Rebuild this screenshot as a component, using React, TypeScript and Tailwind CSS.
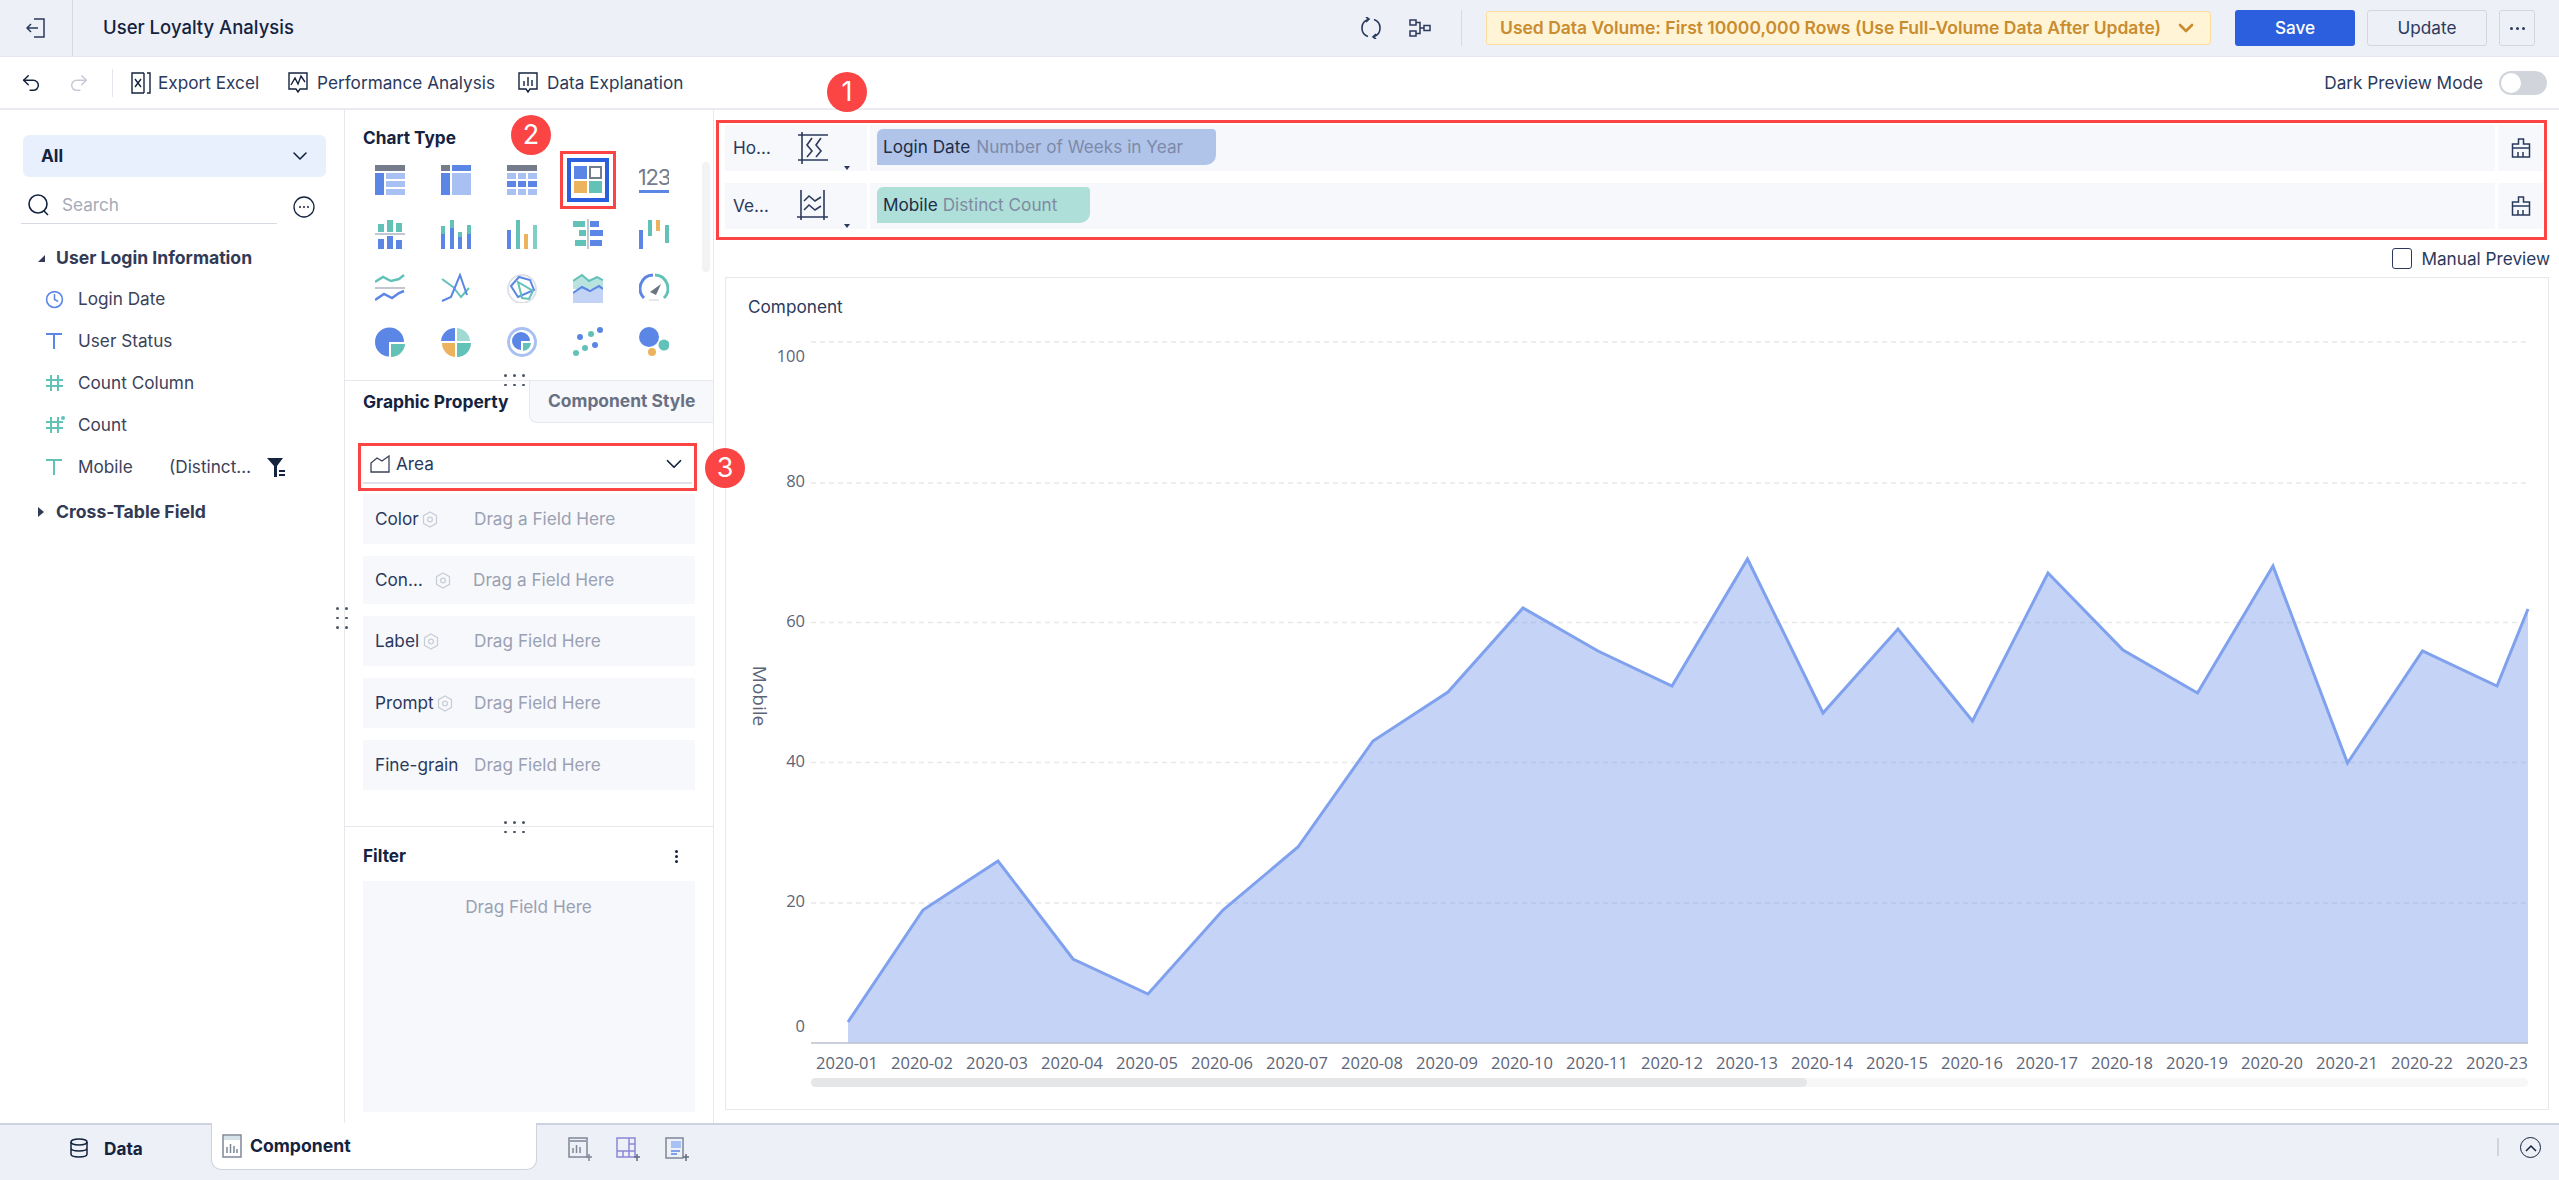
import { ChevronDown, Clock, Undo2, Redo2 } from 'lucide-react';

const B = '#5b86e5';
const T = '#62c2b8';
const O = '#ecb35e';
const L = '#a9c0f2';
const G = '#757c8c';

// chart type thumbnails, all drawn on a 30x30 box
const chartIcons = [
  <>
    <rect x="0" y="0" width="30" height="6" fill={G} />
    <rect x="0" y="8" width="9" height="22" fill={B} />
    <rect x="11" y="8" width="19" height="6" fill={L} />
    <rect x="11" y="16" width="19" height="6" fill={L} />
    <rect x="11" y="24" width="19" height="6" fill={L} />
  </>,
  <>
    <rect x="0" y="0" width="9" height="6" fill={G} />
    <rect x="11" y="0" width="19" height="6" fill={B} />
    <rect x="0" y="8" width="9" height="22" fill={B} />
    <rect x="11" y="8" width="19" height="22" fill={L} />
  </>,
  <>
    <rect x="0" y="0" width="30" height="6" fill={G} />
    <rect x="0" y="8" width="9" height="6" fill={L} />
    <rect x="11" y="8" width="8" height="6" fill={L} />
    <rect x="21" y="8" width="9" height="6" fill={L} />
    <rect x="0" y="16" width="9" height="6" fill={B} />
    <rect x="11" y="16" width="8" height="6" fill={B} />
    <rect x="21" y="16" width="9" height="6" fill={B} />
    <rect x="0" y="24" width="9" height="6" fill={L} />
    <rect x="11" y="24" width="8" height="6" fill={L} />
    <rect x="21" y="24" width="9" height="6" fill={L} />
  </>,
  <>
    <rect x="1" y="1" width="13" height="13" fill={B} />
    <rect x="17" y="2" width="11" height="11" fill="none" stroke={G} strokeWidth="2" />
    <rect x="1" y="16" width="13" height="12" fill={O} />
    <rect x="16" y="16" width="13" height="12" fill={T} />
  </>,
  <>
    <text x="15" y="20" textAnchor="middle" fontSize="22" letterSpacing="-1.2" fill={G} fontFamily="Inter, sans-serif">123</text>
    <rect x="0" y="25" width="30" height="3" fill={B} />
  </>,
  <>
    <rect x="3" y="5" width="6" height="8" fill={T} />
    <rect x="12" y="1" width="6" height="12" fill={T} />
    <rect x="21" y="4" width="6" height="9" fill={T} />
    <rect x="0" y="14" width="30" height="2" fill="#c3c7d1" />
    <rect x="3" y="20" width="6" height="10" fill={B} />
    <rect x="12" y="17" width="6" height="13" fill={B} />
    <rect x="21" y="21" width="6" height="9" fill={B} />
  </>,
  <>
    <rect x="0" y="7" width="4" height="8" fill={T} />
    <rect x="0" y="15" width="4" height="15" fill={B} />
    <rect x="9" y="1" width="4" height="8" fill={T} />
    <rect x="9" y="9" width="4" height="21" fill={B} />
    <rect x="17" y="13" width="4" height="5" fill={T} />
    <rect x="17" y="18" width="4" height="12" fill={B} />
    <rect x="26" y="6" width="4" height="9" fill={T} />
    <rect x="26" y="15" width="4" height="15" fill={B} />
  </>,
  <>
    <rect x="0" y="11" width="4" height="19" fill={B} />
    <rect x="9" y="1" width="4" height="29" fill={T} />
    <rect x="17" y="15" width="4" height="15" fill={O} />
    <rect x="26" y="6" width="4" height="24" fill={T} opacity="0.8" />
  </>,
  <>
    <rect x="0" y="2" width="12" height="6" fill={T} />
    <rect x="17" y="2" width="9" height="6" fill={B} />
    <rect x="6" y="11" width="7" height="6" fill={T} />
    <rect x="17" y="11" width="13" height="6" fill={B} />
    <rect x="2" y="21" width="11" height="6" fill={T} />
    <rect x="17" y="21" width="12" height="6" fill={B} />
    <rect x="14" y="0" width="2" height="30" fill="#c3c7d1" />
  </>,
  <>
    <rect x="0" y="11" width="4" height="19" fill={B} />
    <rect x="9" y="1" width="4" height="16" fill={T} />
    <rect x="17" y="1" width="4" height="11" fill={O} />
    <rect x="26" y="6" width="4" height="18" fill={T} />
  </>,
  <>
    <path d="M0 9 L8 4 L16 8 L24 6 L29 2" fill="none" stroke={T} strokeWidth="2.5" />
    <rect x="0" y="14" width="30" height="2" fill="#c3c7d1" />
    <path d="M0 27 L9 21 L17 25 L24 20 L29 18" fill="none" stroke={B} strokeWidth="2.5" />
  </>,
  <>
    <path d="M1 6 L12 14 L20 24 L28 15" fill="none" stroke={T} strokeWidth="2" />
    <path d="M1 28 L10 24 L19 2 L26 22" fill="none" stroke={B} strokeWidth="2" />
  </>,
  <>
    <circle cx="15" cy="16" r="14" fill="none" stroke="#dfe1e8" strokeWidth="2" />
    <path d="M4 13 L12 4 L23 7 L27 17 L11 24 Z" fill="none" stroke={B} strokeWidth="2" />
    <path d="M11 9 L26 18 L22 26 L15 25 Z" fill="none" stroke={T} strokeWidth="2" />
  </>,
  <>
    <path d="M0 8 L9 2 L16 8 L24 4 L30 7 L30 16 L0 16 Z" fill={T} opacity="0.45" />
    <path d="M0 8 L9 2 L16 8 L24 4 L30 7" fill="none" stroke={T} strokeWidth="2" />
    <path d="M0 20 L9 14 L17 18 L26 13 L30 16 L30 30 L0 30 Z" fill={L} opacity="0.7" />
    <path d="M0 20 L9 14 L17 18 L26 13 L30 16" fill="none" stroke={B} strokeWidth="2" />
  </>,
  <>
    <path d="M5 25 A13.5 13.5 0 0 1 14 2" fill="none" stroke={B} strokeWidth="3" />
    <path d="M16 2 A13.5 13.5 0 0 1 25 25" fill="none" stroke={T} strokeWidth="3" />
    <path d="M11 19 L22 11 L17 22 Z" fill="#6b7280" />
    <rect x="10" y="26" width="10" height="2" fill="#e5e7eb" />
  </>,
  <>
    <path d="M14 15 H29 A14.5 14.5 0 1 0 14 29.5 Z" fill={B} />
    <path d="M16 17 H30 A14 14 0 0 1 16 30 Z" fill={T} />
  </>,
  <>
    <path d="M14 1 L14 14 L0 14 A14 14 0 0 1 14 1 Z" fill={B} />
    <path d="M16 1 A14 14 0 0 1 29 14 L16 14 Z" fill={T} opacity="0.6" />
    <path d="M14 16 L14 30 A14 14 0 0 1 1 16 Z" fill={O} />
    <path d="M16 16 L30 16 A14 14 0 0 1 16 30 Z" fill={T} />
  </>,
  <>
    <circle cx="15" cy="15" r="13.5" fill="none" stroke={L} strokeWidth="3" />
    <path d="M14 14 H23 A9 9 0 1 0 14 23 Z" fill={B} />
    <path d="M16 16 H24 A8.5 8.5 0 0 1 16 24 Z" fill={T} />
  </>,
  <>
    <circle cx="27" cy="3" r="3" fill={B} />
    <circle cx="7" cy="10" r="3" fill={B} />
    <circle cx="18" cy="7" r="3" fill={T} />
    <circle cx="22" cy="18" r="3" fill={B} />
    <circle cx="12" cy="21" r="3" fill={T} />
    <circle cx="3" cy="26" r="3" fill={T} />
  </>,
  <>
    <circle cx="10" cy="10" r="10" fill={B} />
    <circle cx="25" cy="18" r="5.5" fill={T} />
    <circle cx="13" cy="25" r="4" fill={O} />
  </>,
];

const treeItems = [
  { icon: 'clock', name: 'Login Date' },
  { icon: 'textBlue', name: 'User Status' },
  { icon: 'hash', name: 'Count Column' },
  { icon: 'hashStar', name: 'Count' },
  { icon: 'textTeal', name: 'Mobile' },
];

function TreeIcon({ kind }: { kind: string }) {
  if (kind === 'clock') return <Clock size={19} color={B} strokeWidth={2} />;
  if (kind === 'textBlue' || kind === 'textTeal') {
    const c = kind === 'textBlue' ? B : T;
    return (
      <svg width="18" height="18" viewBox="0 0 18 18" fill="none" stroke={c} strokeWidth="2">
        <path d="M1 2 H17 M9 2 V17" />
      </svg>
    );
  }
  return (
    <svg width="21" height="20" viewBox="0 0 21 20" fill="none" stroke={T} strokeWidth="2">
      <path d="M1 7 H18 M1 13 H18 M6 2 V18 M13 2 V18" />
      {kind === 'hashStar' && <circle cx="18" cy="3" r="2" fill={T} stroke="none" />}
    </svg>
  );
}

function Gear() {
  return (
    <svg width="16" height="17" viewBox="0 0 16 17" fill="none" stroke="#c9cdd6" strokeWidth="1.2" className="shrink-0">
      <path d="M8 1 L14.5 4.7 V12.3 L8 16 L1.5 12.3 V4.7 Z" />
      <circle cx="8" cy="8.5" r="2.4" />
    </svg>
  );
}

function Dots({ cols, rows }: { cols: number; rows: number }) {
  return (
    <div className="grid gap-x-[6.5px] gap-y-[7px]" style={{ gridTemplateColumns: `repeat(${cols}, 2.5px)` }}>
      {Array.from({ length: cols * rows }).map((_, i) => (
        <span key={i} className="w-[2.5px] h-[2.5px] bg-[#4b5563] rounded-full" />
      ))}
    </div>
  );
}

function Badge({ n, className }: { n: number; className: string }) {
  return (
    <div className={`absolute w-10 h-10 rounded-full bg-[#fb4444] text-white text-[27px] flex items-center justify-center ${className}`}>
      {n}
    </div>
  );
}

function BrushIcon() {
  return (
    <svg width="20" height="20" viewBox="0 0 20 20" fill="none" stroke="#2b3a5c" strokeWidth="1.5">
      <path d="M7.5 1 H12.5 V6 H18.5 V19 H1.5 V6 H7.5 Z M1.5 10 H18.5 M7 19 V14 M12 19 V14" />
    </svg>
  );
}

function ShelfRow({ label, mt, children, icon }: { label: string; mt: string; children: React.ReactNode; icon: React.ReactNode }) {
  return (
    <div className={`flex h-[46px] ${mt}`}>
      <div className="w-[142px] bg-[#f7f8fc] flex items-center relative">
        <span className="ml-[8px] w-[64px] text-[#2b3a5c]">{label}</span>
        {icon}
        <span className="absolute left-[119px] bottom-[1px] w-0 h-0 border-x-[3.5px] border-x-transparent border-t-[4px] border-t-[#2b3a5c]" />
      </div>
      <div className="ml-[3px] w-[1625px] bg-[#f7f8fc] pl-[7px] pt-[4px]">{children}</div>
      <div className="ml-[3px] w-[45px] bg-[#f7f8fc] flex items-center justify-center">
        <BrushIcon />
      </div>
    </div>
  );
}

const fieldRows = [
  { label: 'Color', w: 'w-[47px]', ml: 'ml-[36px]', hint: 'Drag a Field Here', h: 'h-[50px]', gear: true },
  { label: 'Con…', w: 'w-[60px]', ml: 'ml-[22px]', hint: 'Drag a Field Here', h: 'h-[48px]', gear: true },
  { label: 'Label', w: 'w-[48px]', ml: 'ml-[35px]', hint: 'Drag Field Here', h: 'h-[50px]', gear: true },
  { label: 'Prompt', w: 'w-[62px]', ml: 'ml-[21px]', hint: 'Drag Field Here', h: 'h-[50px]', gear: true },
  { label: 'Fine-grained', w: 'w-[84px]', ml: 'ml-[15px]', hint: 'Drag Field Here', h: 'h-[50px]', gear: false },
];

// page coordinates are used directly through the viewBox of the chart
const points: [number, number][] = [
  [848, 1022], [923, 910], [998, 861], [1073, 959], [1148, 994], [1223, 910], [1298, 847], [1373, 741],
  [1448, 692], [1523, 608], [1598, 651], [1672, 686], [1747.5, 559], [1823, 713], [1898, 629], [1972.5, 721],
  [2048, 573], [2123, 650], [2197.5, 693], [2273, 566], [2347.5, 763], [2422.5, 651], [2497, 686], [2528, 609],
];
const linePath = points.map(p => p.join(',')).join(' ');
const areaPath = `848,1043 ${linePath} 2528,1043`;

function Chart() {
  const ticks = [
    { v: 100, y: 342, ly: 362 },
    { v: 80, y: 483, ly: 487 },
    { v: 60, y: 622.5, ly: 627 },
    { v: 40, y: 762.5, ly: 767 },
    { v: 20, y: 903, ly: 907 },
  ];
  return (
    <svg width="1822" height="770" viewBox="726 330 1822 770" className="block">
      {ticks.map(t => (
        <g key={t.v}>
          <line x1="811" x2="2528" y1={t.y} y2={t.y} stroke="#e6e8ec" strokeWidth="1.5" strokeDasharray="5 4" />
          <text x="805" y={t.ly} textAnchor="end" fontSize="16.5" fill="#5c6478" fontFamily="'Open Sans', sans-serif">{t.v}</text>
        </g>
      ))}
      <text x="805" y="1032" textAnchor="end" fontSize="16.5" fill="#5c6478" fontFamily="'Open Sans', sans-serif">0</text>
      <text x="0" y="0" transform="translate(753 696) rotate(90)" textAnchor="middle" fontSize="19" fill="#5c6478" fontFamily="'Open Sans', sans-serif">Mobile</text>
      <polygon points={areaPath} fill="#7b9bec" fillOpacity="0.44" />
      <polyline points={linePath} fill="none" stroke="#7fa1ee" strokeWidth="3" />
      <line x1="811" x2="2528" y1="1043" y2="1043" stroke="#b9bfcc" strokeWidth="1.5" />
      {Array.from({ length: 23 }).map((_, i) => (
        <text key={i} x={847 + i * 75} y="1069" textAnchor="middle" fontSize="16.5" fill="#5c6478" fontFamily="'Open Sans', sans-serif">
          {`2020-${String(i + 1).padStart(2, '0')}`}
        </text>
      ))}
      <rect x="811" y="1078" width="1717" height="9" rx="4.5" fill="#f7f7f8" />
      <rect x="811" y="1078" width="996" height="9" rx="4.5" fill="#e5e6e8" />
    </svg>
  );
}

export default function App() {
  return (
    <div className="relative w-[2559px] h-[1180px] overflow-hidden flex flex-col bg-white text-[17.2px] text-[#2b3a5c] [font-family:Inter,sans-serif]">
      {/* top bar */}
      <div className="h-[57px] shrink-0 bg-[#edf0f6] border-b border-[#e3e6ee] flex items-center">
        <div className="w-[73px] h-full border-r border-[#d5d9e3] flex items-center justify-center">
          <svg width="20" height="20" viewBox="0 0 20 20" fill="none" stroke="#2b3a5c" strokeWidth="1.5">
            <path d="M8 1 H18 V19 H8 M1 10 H12 M5 6 L1 10 L5 14" />
          </svg>
        </div>
        <div className="ml-[30px] text-[18.5px] font-medium text-[#14233f]">User Loyalty Analysis</div>
        <div className="ml-auto flex items-center">
          <svg width="22" height="22" viewBox="0 0 22 22" fill="none" stroke="#2b3a5c" strokeWidth="1.6" className="mr-[27px]">
            <path d="M8 2.5 A9 9 0 0 0 8 19.5 M14 19.5 A9 9 0 0 0 14 2.5 M6 5 L9 2 L6 0 M16 17 L13 20 L16 22" />
          </svg>
          <svg width="22" height="18" viewBox="0 0 22 18" fill="none" stroke="#2b3a5c" strokeWidth="1.5" className="mr-[30px]">
            <rect x="1" y="1" width="6" height="5" />
            <rect x="1" y="12" width="6" height="5" />
            <rect x="15" y="6.5" width="6" height="5" />
            <path d="M7 3.5 H11 V14.5 H7 M11 9 H15" />
          </svg>
          <div className="w-px h-[36px] bg-[#d5d9e3] mr-[24px]" />
          <div className="w-[725px] h-[34px] bg-[#fff4d6] border border-[#fbdc9e] rounded-[3px] flex items-center pl-[13px] text-[#c98c2f] font-semibold text-[17.5px] whitespace-nowrap">
            <span>Used Data Volume: First 10000,000 Rows (Use Full-Volume Data After Update)</span>
            <ChevronDown size={24} className="ml-auto mr-[12px]" strokeWidth={2.6} />
          </div>
          <div className="ml-[24px] w-[120px] h-[36px] bg-[#2c5fdd] rounded-[3px] flex items-center justify-center text-white font-medium">Save</div>
          <div className="ml-[12px] w-[120px] h-[36px] border border-[#d3d7e0] rounded-[3px] flex items-center justify-center">Update</div>
          <div className="ml-[12px] mr-[24px] w-[36px] h-[36px] border border-[#d3d7e0] rounded-[3px] flex items-center justify-center gap-[3px]">
            <span className="w-[3px] h-[3px] rounded-full bg-[#2b3a5c]" />
            <span className="w-[3px] h-[3px] rounded-full bg-[#2b3a5c]" />
            <span className="w-[3px] h-[3px] rounded-full bg-[#2b3a5c]" />
          </div>
        </div>
      </div>

      {/* toolbar */}
      <div className="h-[53px] shrink-0 border-b-2 border-[#e9ebf1] flex items-center">
        <Undo2 size={22} className="ml-[20px]" strokeWidth={1.6} color="#14233f" />
        <Redo2 size={22} className="ml-[26px]" strokeWidth={1.6} color="#c6cad4" />
        <div className="ml-[22px] w-px h-[28px] bg-[#e3e6ee]" />
        <svg width="20" height="22" viewBox="0 0 20 22" fill="none" stroke="#14233f" strokeWidth="1.4" className="ml-[18px]">
          <path d="M13 1 H1 V21 H13 M16 1 H19 V21 H16 M4 7 L10 15 M10 7 L4 15" />
          <path d="M13 1 V21" />
        </svg>
        <span className="ml-[7px]">Export Excel</span>
        <svg width="20" height="22" viewBox="0 0 20 22" fill="none" stroke="#14233f" strokeWidth="1.4" className="ml-[29px]">
          <path d="M1 1 H19 V17 H12 L10 20 L8 17 H1 Z M3 13 L7 6 L10 12 L13 4 L17 10" />
        </svg>
        <span className="ml-[9px]">Performance Analysis</span>
        <svg width="20" height="22" viewBox="0 0 20 22" fill="none" stroke="#14233f" strokeWidth="1.4" className="ml-[23px]">
          <path d="M1 1 H19 V17 H12 L10 20 L8 17 H1 Z M6 9 V14 M10 5 V14 M14 8 V14" />
        </svg>
        <span className="ml-[9px]">Data Explanation</span>
        <span className="ml-auto">Dark Preview Mode</span>
        <div className="ml-[16px] mr-[12px] w-[48px] h-[24px] rounded-full bg-[#d1d5db] flex items-center pl-[2px]">
          <span className="w-[20px] h-[20px] rounded-full bg-white" />
        </div>
      </div>

      {/* body */}
      <div className="flex-1 min-h-0 flex">
        {/* field list */}
        <div className="w-[345px] shrink-0 border-r border-[#e6e8ee] relative">
          <div className="ml-[23px] mt-[25px] w-[303px] h-[42px] bg-[#e8f0fe] rounded-[6px] flex items-center pl-[18px] font-bold text-[#14233f]">
            All
            <ChevronDown size={24} className="ml-auto mr-[14px]" strokeWidth={1.6} />
          </div>
          <div className="flex items-center mt-[16px] h-[31px]">
            <div className="ml-[21px] w-[256px] h-[31px] border-b border-[#d7dbe6] flex items-center pb-[6px]">
              <svg width="24" height="24" viewBox="0 0 24 24" fill="none" stroke="#14233f" strokeWidth="1.6" className="ml-[6px]">
                <circle cx="11" cy="11" r="9" />
                <path d="M17 18 L21 22" />
              </svg>
              <span className="ml-[11px] text-[#a5abb8]">Search</span>
            </div>
            <svg width="22" height="22" viewBox="0 0 22 22" fill="none" stroke="#14233f" strokeWidth="1.3" className="ml-[16px] -mt-[4px]">
              <circle cx="11" cy="11" r="10" />
              <circle cx="7" cy="11" r="1" fill="#14233f" stroke="none" />
              <circle cx="11" cy="11" r="1" fill="#14233f" stroke="none" />
              <circle cx="15" cy="11" r="1" fill="#14233f" stroke="none" />
            </svg>
          </div>
          <div className="mt-[15px] h-[39px] flex items-center font-bold text-[17.6px] text-[#323a55]">
            <span className="ml-[38px] mr-[11px] w-0 h-0 border-l-[7px] border-l-transparent border-b-[7px] border-b-[#323a55]" />
            User Login Information
          </div>
          {treeItems.map(item => (
            <div key={item.name} className="h-[42px] flex items-center text-[#3b4259]">
              <span className="ml-[45px] w-[33px] shrink-0">
                <TreeIcon kind={item.icon} />
              </span>
              <span className={item.name === 'Mobile' ? 'w-[91px]' : ''}>{item.name}</span>
              {item.name === 'Mobile' && (
                <>
                  <span className="w-[97px]">(Distinct…</span>
                  <svg width="20" height="20" viewBox="0 0 20 20" fill="#14233f">
                    <path d="M1 1 H17 L11 9 V20 H8 V9 Z" />
                    <rect x="13" y="13" width="6" height="2" />
                    <rect x="13" y="17" width="6" height="2" />
                  </svg>
                </>
              )}
            </div>
          ))}
          <div className="mt-[3px] h-[42px] flex items-center font-bold text-[17.6px] text-[#323a55]">
            <span className="ml-[38px] mr-[12px] w-0 h-0 border-y-[5px] border-y-transparent border-l-[6px] border-l-[#323a55]" />
            Cross-Table Field
          </div>
          <div className="absolute left-[336px] top-[497px]">
            <Dots cols={2} rows={3} />
          </div>
        </div>

        {/* config panel */}
        <div className="w-[369px] shrink-0 border-r border-[#e6e8ee] flex flex-col relative">
          <div className="h-[271px] shrink-0 border-b border-[#e6e8ee] relative">
            <div className="ml-[18px] mt-[18px] leading-[20px] font-bold text-[#14233f]">Chart Type</div>
            <div className="ml-[12px] mt-[5px] grid grid-cols-[repeat(5,66px)] auto-rows-[54px]">
              {chartIcons.map((icon, i) => (
                <div key={i} className="flex items-center justify-center">
                  {i === 3 ? (
                    <div className="border-[3px] border-[#fb4444] w-[56px] h-[58px] p-[4px] flex shrink-0">
                      <div className="border-[4px] border-[#2c5fdd] flex-1 flex items-center justify-center">
                        <svg width="30" height="30" viewBox="0 0 30 30">{icon}</svg>
                      </div>
                    </div>
                  ) : (
                    <svg width="30" height="30" viewBox="0 0 30 30">{icon}</svg>
                  )}
                </div>
              ))}
            </div>
            <div className="absolute left-[357px] top-[52px] w-[8px] h-[110px] rounded-full bg-[#f2f3f5]" />
            <div className="absolute left-[159px] bottom-[-6px]">
              <Dots cols={3} rows={2} />
            </div>
          </div>
          <div className="flex h-[42px] shrink-0 font-bold text-[17.4px]">
            <div className="w-[184px] pl-[18px] flex items-center text-[#14233f]">Graphic Property</div>
            <div className="flex-1 pl-[18px] flex items-center text-[#687083] bg-[#f7f8fc] border-l border-b border-[#e6e8ee] rounded-bl-[8px]">Component Style</div>
          </div>
          <div className="ml-[13px] mt-[20px] w-[339px] h-[48px] border-[3px] border-[#fb4444] px-[2px] shrink-0">
            <div className="h-[38px] border-b-2 border-[#dfe2ea] flex items-center">
              <svg width="20" height="18" viewBox="0 0 20 18" fill="none" stroke="#3b4259" strokeWidth="1.3" className="ml-[7px]">
                <path d="M1 17 V8 L7 3 L12 6 L19 1 V17 Z" />
              </svg>
              <span className="ml-[6px]">Area</span>
              <ChevronDown size={26} className="ml-auto mr-[5px]" strokeWidth={1.6} color="#14233f" />
            </div>
          </div>
          <div className="ml-[18px] mt-[3px] w-[332px] flex flex-col gap-[12px] shrink-0">
            {fieldRows.map(r => (
              <div key={r.label} className={`${r.h} bg-[#f7f8fc] flex items-center pl-[12px]`}>
                <div className={`${r.w} shrink-0 overflow-hidden whitespace-nowrap`}>{r.label}</div>
                {r.gear && <Gear />}
                <div className={`${r.ml} text-[#9aa1b2] whitespace-nowrap`}>{r.hint}</div>
              </div>
            ))}
          </div>
          <div className="mt-[36px] border-t border-[#e6e8ee] relative flex-1 flex flex-col">
            <div className="absolute left-[159px] top-[-6px]">
              <Dots cols={3} rows={2} />
            </div>
            <div className="mt-[19px] pl-[18px] pr-[35px] flex items-center justify-between font-bold text-[#14233f] leading-[20px]">
              Filter
              <span className="w-[3px] flex flex-col gap-[2px]">
                <span className="w-[3px] h-[3px] bg-[#14233f] rounded-full" />
                <span className="w-[3px] h-[3px] bg-[#14233f] rounded-full" />
                <span className="w-[3px] h-[3px] bg-[#14233f] rounded-full" />
              </span>
            </div>
            <div className="ml-[18px] mt-[15px] w-[332px] h-[231px] bg-[#f7f8fc] text-center text-[#9aa1b2] pt-[13px] pr-[1px]">Drag Field Here</div>
          </div>
        </div>

        {/* editor */}
        <div className="flex-1 min-w-0 flex flex-col">
          <div className="ml-[2px] mt-[10px] w-[1831px] h-[120px] border-[3px] border-[#fb4444] pt-[2px] pl-[6px] shrink-0">
            <ShelfRow
              label="Ho…"
              mt=""
              icon={
                <svg width="32" height="32" viewBox="0 0 32 32" fill="none" stroke="#2b3a5c" strokeWidth="1.6">
                  <path d="M1 3 H31 M1 28 H31 M5 0 V32 M15 6 L10 13 L15 19 L10 25 M24 6 L19 13 L24 19 L19 25" />
                </svg>
              }
            >
              <div className="w-[339px] h-[36px] bg-[#b0c4ea] rounded-tl-[6px] rounded-tr-[4px] rounded-br-[10px] flex items-center pl-[6px] whitespace-nowrap">
                <span className="text-[#1f2d46]">Login Date</span>
                <span className="ml-[6px] text-[#7d8aa8]">Number of Weeks in Year</span>
              </div>
            </ShelfRow>
            <ShelfRow
              label="Ve…"
              mt="mt-[12px]"
              icon={
                <svg width="32" height="32" viewBox="0 0 32 32" fill="none" stroke="#2b3a5c" strokeWidth="1.6">
                  <path d="M4 0 V30 M27 0 V30 M0 27 H31 M7 11 L12 6 L18 11 L24 7 M7 20 L12 15 L18 20 L24 16" />
                </svg>
              }
            >
              <div className="w-[213px] h-[36px] bg-[#aedfd9] rounded-tl-[6px] rounded-tr-[4px] rounded-br-[10px] flex items-center pl-[6px] whitespace-nowrap">
                <span className="text-[#1f2d46]">Mobile</span>
                <span className="ml-[5px] text-[#7f8aa0]">Distinct Count</span>
              </div>
            </ShelfRow>
          </div>
          <div className="h-[37px] shrink-0 flex items-center justify-end pr-[9px]">
            <span className="w-[20px] h-[21px] border border-[#2b3a5c] rounded-[3px] mr-[9px]" />
            Manual Preview
          </div>
          <div className="ml-[11px] w-[1824px] h-[833px] border border-[#e6e8ee] shrink-0">
            <div className="h-[52px] pl-[22px] pt-[19px] leading-[20px]">Component</div>
            <Chart />
          </div>
        </div>
      </div>

      {/* bottom bar */}
      <div className="h-[57px] shrink-0 bg-[#edf0f6] border-t-2 border-[#cdd2de] flex items-start relative">
        <svg width="18" height="20" viewBox="0 0 18 20" fill="none" stroke="#14233f" strokeWidth="1.5" className="ml-[70px] mt-[13px]">
          <ellipse cx="9" cy="4" rx="8" ry="3" />
          <path d="M1 4 V16 C1 18 5 19 9 19 C13 19 17 18 17 16 V4 M1 10 C1 12 5 13 9 13 C13 13 17 12 17 10" />
        </svg>
        <span className="ml-[16px] w-[37px] mt-[12px] font-bold text-[#14233f] leading-[24px]">Data</span>
        <div className="ml-[70px] w-[326px] h-[47px] -mt-[2px] bg-white border border-t-0 border-[#cdd2de] rounded-b-[10px] flex items-center">
          <svg width="20" height="24" viewBox="0 0 20 24" className="ml-[10px]" fill="none" stroke="#7f8796" strokeWidth="1.5">
            <rect x="1" y="1" width="18" height="22" />
            <rect x="2" y="2" width="16" height="4" fill="#d5e2ea" stroke="none" />
            <path d="M5 19 V13 M8.5 19 V10 M12 19 V12 M15 19 V15" />
          </svg>
          <span className="ml-[8px] font-bold text-[17.6px] text-[#14233f]">Component</span>
        </div>
        <svg width="24" height="24" viewBox="0 0 24 24" className="ml-[31px] mt-[12px]" fill="none" stroke="#7f8796" strokeWidth="1.5">
          <rect x="1" y="1" width="18" height="19" />
          <path d="M5 16 V11 M8.5 16 V8 M12 16 V10 M2 4 H18 M18 20 H24 M21 17 V24" />
        </svg>
        <svg width="24" height="24" viewBox="0 0 24 24" className="ml-[24px] mt-[12px]" fill="none" stroke="#8d86d6" strokeWidth="1.5">
          <rect x="1" y="1" width="18" height="19" />
          <path d="M1 14 H19 M13 1 V14 M7 14 V20 M13 14 V20 M13 7 H19" />
          <path d="M18 20 H24 M21 17 V24" stroke="#5f6b7f" />
        </svg>
        <svg width="24" height="24" viewBox="0 0 24 24" className="ml-[25px] mt-[12px]" fill="none" stroke="#7f8796" strokeWidth="1.5">
          <rect x="1" y="1" width="17" height="20" />
          <rect x="6" y="4" width="10" height="7" fill="#a9c0f2" stroke="none" />
          <path d="M6 14 H15 M6 17 H12" stroke="#5b86e5" />
          <path d="M18 20 H24 M21 17 V24" stroke="#5f6b7f" />
        </svg>
        <div className="ml-auto mt-[13px] w-[2px] h-[18px] bg-[#d0d4dd]" />
        <div className="ml-[21px] mr-[18px] mt-[12px] w-[21px] h-[21px] rounded-full border-[1.5px] border-[#14233f] flex items-center justify-center">
          <svg width="12" height="8" viewBox="0 0 12 8" fill="none" stroke="#14233f" strokeWidth="1.5">
            <path d="M1 7 L6 2 L11 7" />
          </svg>
        </div>
      </div>

      {/* numbered callouts */}
      <Badge n={1} className="left-[827px] top-[72px]" />
      <Badge n={2} className="left-[511px] top-[115px]" />
      <Badge n={3} className="left-[705px] top-[448px]" />
    </div>
  );
}
